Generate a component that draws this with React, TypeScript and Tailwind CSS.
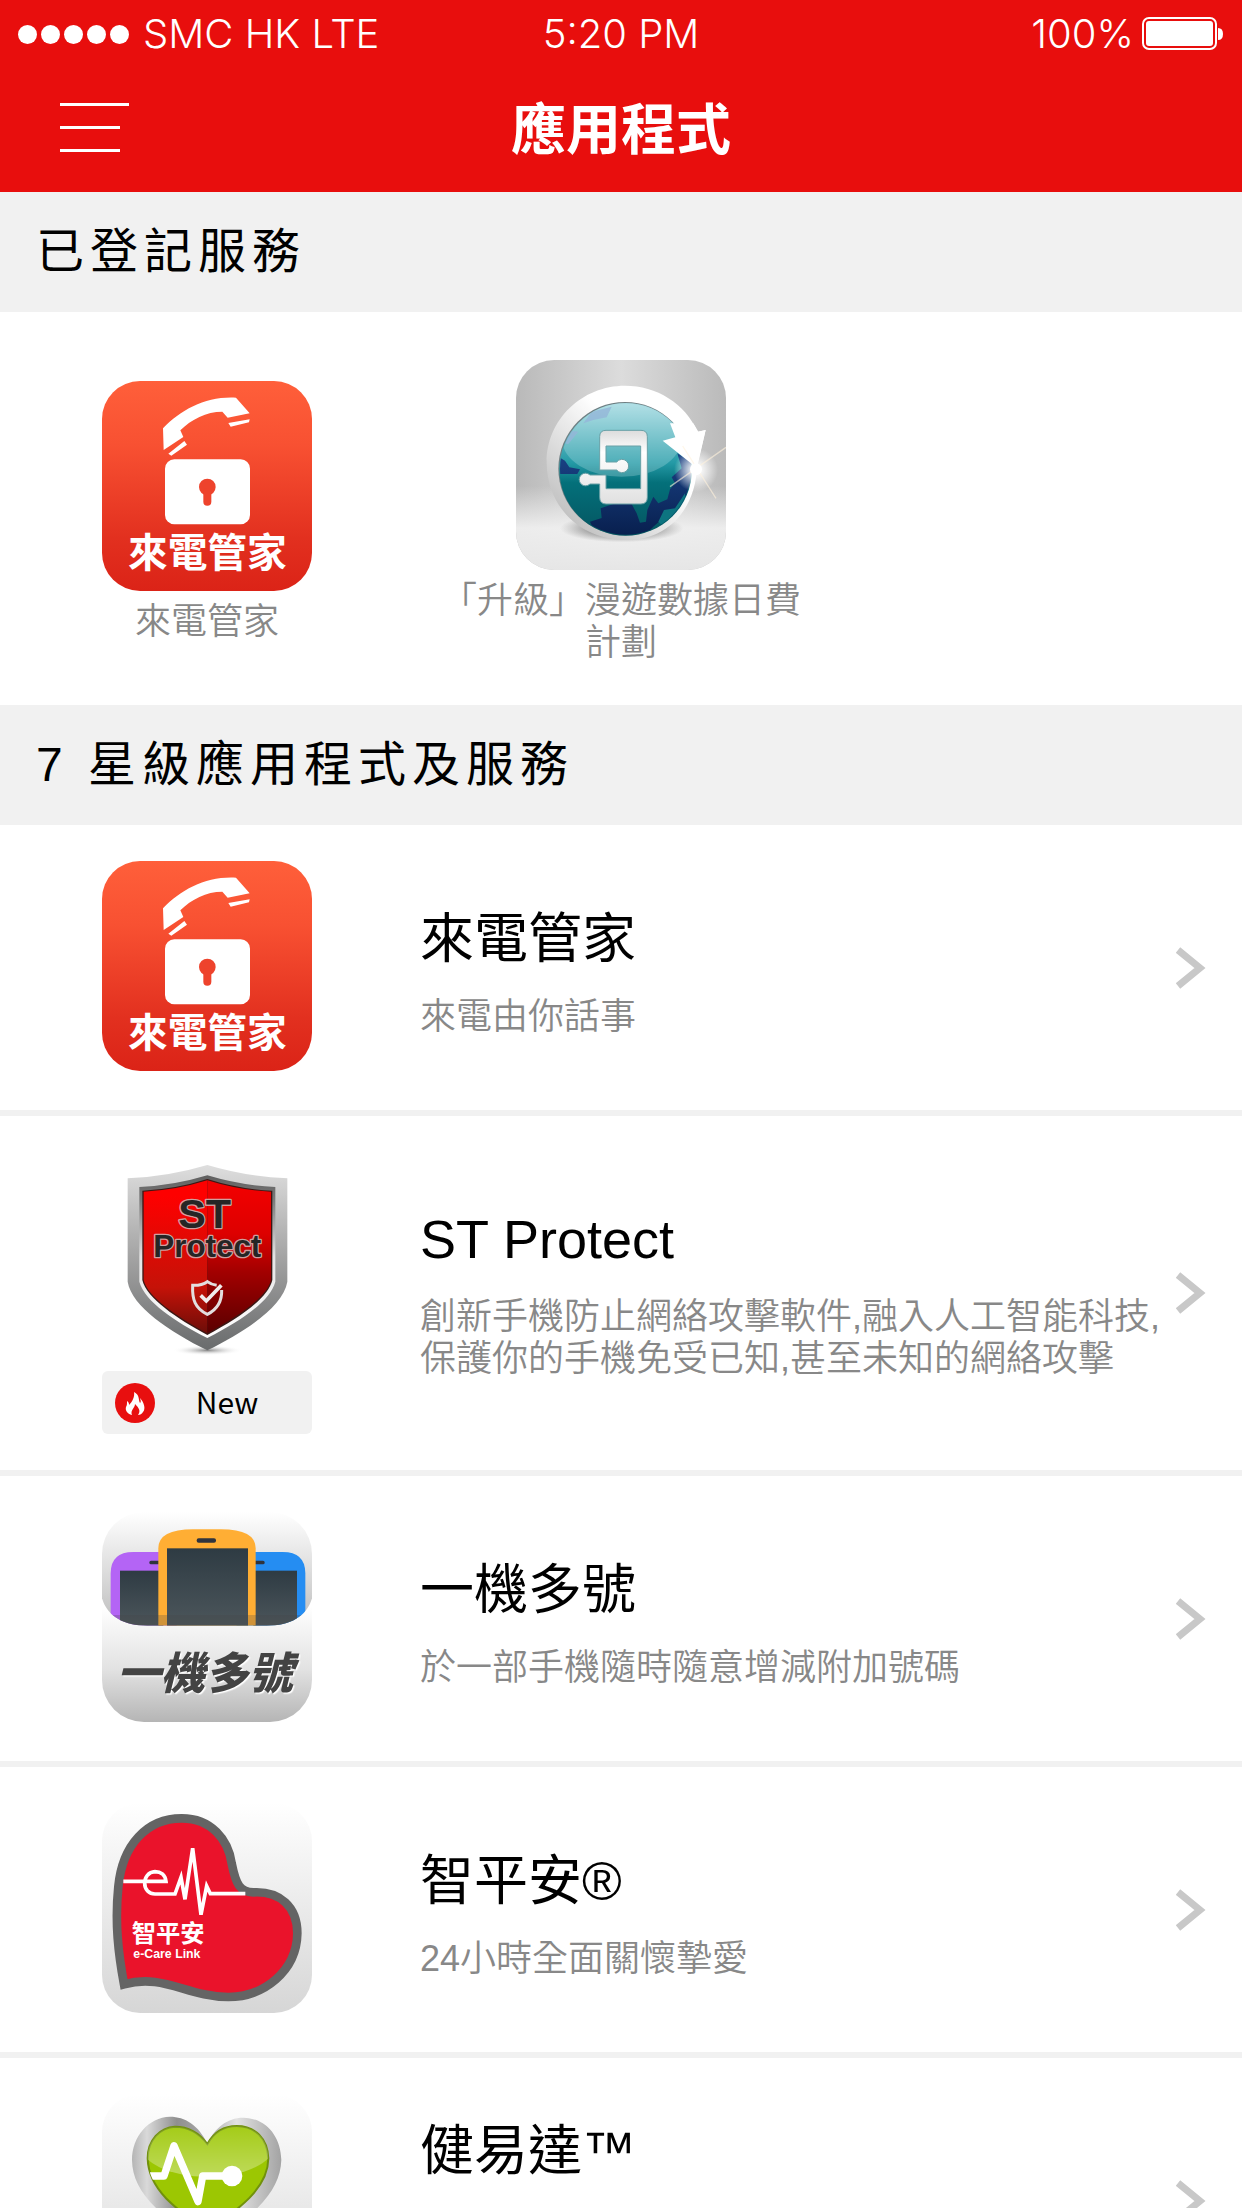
import React from "react";

const CallGuardIcon = () => (
  <svg viewBox="72 63 630 630" className="h-[210px] w-[210px] shrink-0" role="img" aria-label="來電管家">
    <defs>
      <linearGradient id="callBg" x1="0" y1="0" x2="0" y2="1">
        <stop offset="0" stopColor="#ff5f3a" />
        <stop offset="0.3" stopColor="#f85132" />
        <stop offset="0.75" stopColor="#e2301f" />
        <stop offset="1" stopColor="#db2317" />
      </linearGradient>
    </defs>
    <rect x="72" y="63" width="630" height="630" rx="114" fill="url(#callBg)" />
    {/* handset */}
    <path
      fill="#fff"
      d="M255 205C310 148 385 108 474 113L515 160L449 173L433 155C385 155 340 178 307 211L316 231L257 270Z"
    />
    <path fill="#fff" d="M451 189L515 178L513 187L458 200ZM271 281L319 243L327 254L280 287Z" />
    {/* lock */}
    <rect x="261" y="298" width="255" height="195" rx="28" fill="#fff" />
    <circle cx="388" cy="381" r="25" fill="#ee432c" />
    <rect x="376" y="385" width="24" height="52" rx="12" fill="#ee432c" />
    <text x="388" y="621" fontSize="119" textAnchor="middle" className="fill-white font-['Noto_Sans_CJK_TC',sans-serif] font-bold">
      來電管家
    </text>
  </svg>
);

const RoamingIcon = () => (
  <svg viewBox="228 60 630 630" className="h-[210px] w-[210px] shrink-0" role="img" aria-label="漫遊數據">
    <defs>
      <linearGradient id="roamWall" x1="0" y1="0" x2="1" y2="0">
        <stop offset="0" stopColor="#b9b9b9" />
        <stop offset="0.5" stopColor="#dcdcdc" />
        <stop offset="1" stopColor="#bababa" />
      </linearGradient>
      <linearGradient id="roamFloor" x1="0" y1="0" x2="0" y2="1">
        <stop offset="0.6" stopColor="#f4f4f4" stopOpacity="0" />
        <stop offset="0.8" stopColor="#f2f2f2" stopOpacity="0.9" />
        <stop offset="1" stopColor="#e6e6e6" />
      </linearGradient>
      <linearGradient id="roamSea" x1="0" y1="0" x2="0" y2="1">
        <stop offset="0" stopColor="#a8dbe2" />
        <stop offset="0.45" stopColor="#249aa6" />
        <stop offset="0.6" stopColor="#04707a" />
        <stop offset="1" stopColor="#045560" />
      </linearGradient>
      <linearGradient id="roamLand" x1="0" y1="0" x2="0" y2="1">
        <stop offset="0" stopColor="#1a4386" />
        <stop offset="1" stopColor="#071d4b" />
      </linearGradient>
      <linearGradient id="roamRing" x1="1" y1="0" x2="0" y2="1">
        <stop offset="0.4" stopColor="#fff" />
        <stop offset="0.85" stopColor="#c4c4c4" />
        <stop offset="1" stopColor="#aaa" />
      </linearGradient>
      <linearGradient id="roamPhone" x1="0" y1="0" x2="0" y2="1">
        <stop offset="0" stopColor="#dcdcdc" />
        <stop offset="0.3" stopColor="#fff" />
        <stop offset="1" stopColor="#e0e0e0" />
      </linearGradient>
      <radialGradient id="roamShadow">
        <stop offset="0.4" stopColor="#666" stopOpacity="0.8" />
        <stop offset="1" stopColor="#888" stopOpacity="0" />
      </radialGradient>
      <radialGradient id="roamGlow">
        <stop offset="0" stopColor="#fff" />
        <stop offset="0.3" stopColor="#fff" stopOpacity="0.8" />
        <stop offset="1" stopColor="#fff" stopOpacity="0" />
      </radialGradient>
      <clipPath id="roamBox">
        <rect x="228" y="60" width="630" height="630" rx="114" />
      </clipPath>
      <clipPath id="roamGlobe">
        <circle cx="557" cy="387" r="197" />
      </clipPath>
    </defs>
    <g clipPath="url(#roamBox)">
      <rect x="228" y="60" width="630" height="630" fill="url(#roamWall)" />
      <rect x="228" y="60" width="630" height="630" fill="url(#roamFloor)" />
      <ellipse cx="545" cy="565" rx="185" ry="42" fill="url(#roamShadow)" />
      {/* ring that ends in the arrow head */}
      <path
        fill="url(#roamRing)"
        d="M555 137C650 137 735 190 773 275L797 270L771 378C768 500 690 600 560 600C420 600 322 500 320 370C318 240 425 137 555 137Z"
      />
      <circle cx="555" cy="386" r="200" fill="#6f7f83" />
      <circle cx="557" cy="388" r="199" fill="url(#roamSea)" />
      <g clipPath="url(#roamGlobe)">
        <path
          fill="url(#roamLand)"
          d="M355 350L375 362L388 382L420 388L412 402L355 402ZM450 545L485 534L482 505L520 492L575 492L590 520L600 548L618 545L622 510L640 470L655 490L682 478L690 448L705 430L695 412L725 385L712 340L760 370L760 520L700 530L680 525L640 560L600 600L470 590Z"
        />
        <path fill="#0d7480" d="M655 545L672 510L705 505L735 460L735 500L705 540L670 560Z" />
        <path fill="#7fa3cf" opacity="0.8" d="M430 250L455 215L515 200L500 232L460 240ZM372 310L390 272L415 275L385 312Z" />
        <ellipse cx="545" cy="300" rx="178" ry="110" fill="#d5f1f4" opacity="0.25" />
      </g>
      <path fill="#fff" d="M668 302L706 292L690 250L760 250L775 275L797 270L771 384Z" />
      {/* phone with its two connectors */}
      <path
        fill="url(#roamPhone)"
        stroke="#68a0a6"
        strokeWidth="3"
        d="M498 271H603Q622 271 622 290V472Q622 492 603 492H498Q479 492 479 472V432H450A19 19 0 1 1 450 405H498V446H602V318H498V366H530A20 20 0 1 1 530 390H479V290Q479 271 498 271Z"
      />
      {/* sparkle */}
      <circle cx="768" cy="390" r="66" fill="url(#roamGlow)" />
      <path stroke="#fff1dc" strokeWidth="4" opacity="0.6" fill="none" d="M690 440L858 322M728 318L828 475" />
      <circle cx="768" cy="388" r="18" fill="#fff" />
    </g>
  </svg>
);

const ProtectIcon = () => (
  <svg viewBox="36 36 630 630" className="h-[210px] w-[210px] shrink-0" role="img" aria-label="ST Protect">
    <defs>
      <linearGradient id="shieldRim" x1="0" y1="0" x2="0" y2="1">
        <stop offset="0" stopColor="#dedede" />
        <stop offset="0.5" stopColor="#a3a3a3" />
        <stop offset="1" stopColor="#696b6c" />
      </linearGradient>
      <linearGradient id="shieldBevel" x1="0" y1="0" x2="0" y2="1">
        <stop offset="0" stopColor="#5f5f5f" />
        <stop offset="0.15" stopColor="#7a7a7a" />
        <stop offset="0.5" stopColor="#e4e4e4" />
        <stop offset="1" stopColor="#fff" />
      </linearGradient>
      <linearGradient id="shieldLeft" x1="0" y1="0" x2="0" y2="1">
        <stop offset="0.1" stopColor="#fe0000" />
        <stop offset="0.7" stopColor="#c51208" />
        <stop offset="1" stopColor="#6c0d08" />
      </linearGradient>
      <linearGradient id="shieldRight" x1="0" y1="0" x2="0" y2="1">
        <stop offset="0" stopColor="#f40000" />
        <stop offset="0.35" stopColor="#dd0000" />
        <stop offset="0.6" stopColor="#a20000" />
        <stop offset="1" stopColor="#5a0000" />
      </linearGradient>
      <radialGradient id="shieldShadow">
        <stop offset="0" stopColor="#888" />
        <stop offset="1" stopColor="#fff" stopOpacity="0" />
      </radialGradient>
    </defs>
    <ellipse cx="352" cy="631" rx="105" ry="15" fill="url(#shieldShadow)" />
    <path fill="url(#shieldRim)" d="M352 75Q470 110 592 115V425C580 500 465 575 352 631C240 575 125 500 113 425V115Q235 110 352 75Z" />
    <path fill="url(#shieldBevel)" d="M352 106Q455 137 556 141V425C540 485 450 545 352 594C255 545 165 485 148 425V141Q250 137 352 106Z" />
    <path fill="#3c1714" d="M352 117Q450 148 547 152V420C535 475 445 535 352 585C260 535 170 475 157 420V152Q255 148 352 117Z" />
    <path fill="url(#shieldLeft)" d="M352 121V580C262 530 173 472 161 420V155Q256 151 352 121Z" />
    <path fill="url(#shieldRight)" d="M352 121V580C442 530 531 472 543 420V155Q448 151 352 121Z" />
    <text
      className="font-['Liberation_Sans',sans-serif] font-bold"
      fill="#252525"
      stroke="#cf9f9f"
      strokeWidth="8"
      strokeLinejoin="round"
      paintOrder="stroke"
      textAnchor="middle"
    >
      <tspan x="344" y="264" fontSize="124">ST</tspan>
      <tspan x="352" y="350" fontSize="94">Protect</tspan>
    </text>
    <path
      fill="none"
      stroke="#e3dede"
      strokeWidth="9"
      d="M380 436Q362 433 352 425Q335 437 308 436C306 478 315 505 352 523C388 505 396 478 395 450"
    />
    <path fill="none" stroke="#f1eded" strokeWidth="11" d="M332 466L349 483L394 436" />
  </svg>
);

const PhonesIcon = () => (
  <svg viewBox="36 36 630 630" className="h-[210px] w-[210px] shrink-0" role="img" aria-label="一機多號">
    <defs>
      <linearGradient id="phonesTop" x1="0" y1="0" x2="0" y2="1">
        <stop offset="0" stopColor="#fff" />
        <stop offset="1" stopColor="#bdbdbd" />
      </linearGradient>
      <linearGradient id="phonesBottom" x1="0" y1="0" x2="0" y2="1">
        <stop offset="0.45" stopColor="#fff" />
        <stop offset="0.75" stopColor="#e2e2e2" />
        <stop offset="1" stopColor="#b5b5b5" />
      </linearGradient>
      <linearGradient id="phonesScreen" x1="0" y1="0" x2="0" y2="1">
        <stop offset="0" stopColor="#2e3b43" />
        <stop offset="1" stopColor="#4d575c" />
      </linearGradient>
      <clipPath id="phonesBox">
        <rect x="36" y="36" width="630" height="630" rx="126" />
      </clipPath>
      <clipPath id="phonesTray">
        <path d="M36 36H666V295C650 350 600 377 530 377H172C102 377 52 350 36 295Z" />
      </clipPath>
    </defs>
    <g clipPath="url(#phonesBox)">
      <rect x="36" y="36" width="630" height="630" fill="url(#phonesBottom)" />
      <g clipPath="url(#phonesTray)">
        <rect x="36" y="36" width="630" height="341" fill="url(#phonesTop)" />
        <path fill="#b464f5" d="M62 377V220Q62 156 130 156H260V377Z" />
        <path fill="#258df2" d="M646 377V220Q646 156 578 156H440V377Z" />
        <rect x="178" y="182" width="50" height="11" rx="5" fill="#30343d" />
        <rect x="478" y="182" width="46" height="11" rx="5" fill="#30343d" />
        <rect x="90" y="212" width="130" height="170" fill="url(#phonesScreen)" />
        <rect x="490" y="212" width="131" height="170" fill="url(#phonesScreen)" />
        <path fill="#ffae34" d="M205 377V145Q205 88 310 88H392Q497 88 497 145V377Z" />
        <rect x="320" y="115" width="58" height="13" rx="6" fill="#30343d" />
        <rect x="231" y="145" width="243" height="240" fill="url(#phonesScreen)" />
        <rect x="36" y="345" width="630" height="32" fill="#444" opacity="0.25" />
      </g>
      <text
        x="80"
        y="566"
        fontSize="132"
        fill="#434343"
        className="font-['Noto_Sans_CJK_TC',sans-serif] font-black italic drop-shadow-[4px_4px_1px_#fff]"
      >
        一機多號
      </text>
    </g>
  </svg>
);

const CareLinkIcon = () => (
  <svg viewBox="36 39 630 630" className="h-[210px] w-[210px] shrink-0" role="img" aria-label="智平安">
    <defs>
      <linearGradient id="careBg" x1="0" y1="0" x2="0" y2="1">
        <stop offset="0" stopColor="#fff" />
        <stop offset="1" stopColor="#d6d6d6" />
      </linearGradient>
    </defs>
    <rect x="36" y="39" width="630" height="630" rx="114" fill="url(#careBg)" />
    <path
      fill="#ea132b"
      stroke="#646464"
      strokeWidth="26"
      d="M102 583C85 490 74 400 85 290C97 165 170 85 275 85C365 85 415 150 425 220C438 285 450 305 490 307C570 303 622 350 622 430C620 545 520 621 415 621C290 620 220 550 102 583Z"
    />
    {/* e and pulse line */}
    <path
      fill="none"
      stroke="#fff"
      strokeWidth="11"
      d="M100 274H228C226 254 212 245 195 245C175 246 164 262 164 279C164 299 177 312 195 312H255L273 262L285 328L308 175L333 374L350 288L361 311H466"
    />
    <g fill="#fff" className="font-bold">
      <text x="125" y="455" fontSize="73" className="font-['Noto_Sans_CJK_TC',sans-serif]">智平安</text>
      <text x="130" y="504" fontSize="37" className="font-['Liberation_Sans',sans-serif]">e-Care Link</text>
    </g>
  </svg>
);

const HealthIcon = () => (
  <svg viewBox="36 42 630 630" className="h-[210px] w-[210px] shrink-0" role="img" aria-label="健易達">
    <defs>
      <linearGradient id="healthBg" x1="0" y1="0" x2="0" y2="1">
        <stop offset="0" stopColor="#fff" />
        <stop offset="1" stopColor="#d6d6d6" />
      </linearGradient>
      <linearGradient id="healthRim" x1="0" y1="0" x2="1" y2="0">
        <stop offset="0" stopColor="#b5b5b5" />
        <stop offset="0.1" stopColor="#d9d9d9" />
        <stop offset="0.3" stopColor="#8f8f8f" />
        <stop offset="0.5" stopColor="#a9a9a9" />
        <stop offset="0.7" stopColor="#e2e2e2" />
        <stop offset="1" stopColor="#a3a3a3" />
      </linearGradient>
      <linearGradient id="healthShine" x1="0" y1="0" x2="0" y2="1">
        <stop offset="0" stopColor="#fff" stopOpacity="0" />
        <stop offset="1" stopColor="#fff" stopOpacity="0.35" />
      </linearGradient>
      <clipPath id="healthHeart">
        <path d="M352 192C325 155 290 140 255 140C210 142 173 180 173 235C175 330 260 390 352 450C445 390 535 325 535 235C533 175 495 138 440 138C400 138 370 160 352 192Z" />
      </clipPath>
    </defs>
    <rect x="36" y="42" width="630" height="630" rx="114" fill="url(#healthBg)" />
    <path fill="url(#healthRim)" d="M352 190C325 135 285 110 240 110C175 112 126 170 126 240C128 330 190 390 352 510C510 390 570 330 574 240C572 170 530 115 460 113C410 113 375 145 352 190Z" />
    <path
      fill="#9cc702"
      stroke="#71910c"
      strokeWidth="6"
      d="M352 192C325 155 290 140 255 140C210 142 173 180 173 235C175 330 260 390 352 450C445 390 535 325 535 235C533 175 495 138 440 138C400 138 370 160 352 192Z"
    />
    <ellipse cx="352" cy="190" rx="205" ry="100" fill="url(#healthShine)" clipPath="url(#healthHeart)" />
    <path
      fill="none"
      stroke="#fff"
      strokeWidth="22"
      strokeLinejoin="round"
      d="M180 288H222L252 197L324 365L338 288H420"
      clipPath="url(#healthHeart)"
    />
    <circle cx="426" cy="288" r="31" fill="#fff" />
  </svg>
);

const FlameIcon = () => (
  <svg viewBox="0 0 40 40" className="h-10 w-10 shrink-0" aria-hidden="true">
    <circle cx="20" cy="20" r="20" fill="#e80f0f" />
    <path
      fill="#fff"
      d="M19 9C25 12 23 16 25 20C26 19 26 18 25 15C29 19 31 26 28 29C27 31 25 32 23 32C26 28 24 25 20 21C20 25 15 27 17 32C12 31 10 27 11 24C12 22 12 21 12 18C14 19 14 21 14 22C17 19 20 14 19 9Z"
    />
  </svg>
);

const Chevron = () => (
  <svg viewBox="0 0 30 42" className="h-[42px] w-[30px] shrink-0" aria-hidden="true">
    <path d="M2 3L24 21L2 39" fill="none" stroke="#c8c8c8" strokeWidth="7" />
  </svg>
);

const SectionTitle = ({ children }: { children: React.ReactNode }) => (
  <h2 className="flex h-[120px] items-center bg-[#f1f1f1] px-9 text-5xl tracking-[6px] text-black">{children}</h2>
);

const services = [
  { name: "來電管家", Icon: CallGuardIcon },
  { name: "「升級」漫遊數據日費計劃", Icon: RoamingIcon },
];

const apps = [
  { title: "來電管家", desc: "來電由你話事", Icon: CallGuardIcon, isNew: false },
  {
    title: "ST Protect",
    desc: "創新手機防止網絡攻擊軟件,融入人工智能科技,保護你的手機免受已知,甚至未知的網絡攻擊",
    Icon: ProtectIcon,
    isNew: true,
  },
  { title: "一機多號", desc: "於一部手機隨時隨意增減附加號碼", Icon: PhonesIcon, isNew: false },
  { title: "智平安®", desc: "24小時全面關懷摯愛", Icon: CareLinkIcon, isNew: false },
  { title: "健易達™", desc: "", Icon: HealthIcon, isNew: false },
];

const App = () => {
  return (
    <div className="h-screen overflow-hidden bg-white font-['Liberation_Sans','Noto_Sans_CJK_TC',sans-serif]">
      {/* Header */}
      <header className="bg-[#e80e0d] text-white">
        <div className="grid h-[68px] grid-cols-3 items-center px-[18px] font-['Inter',sans-serif] text-[40px] font-[350]">
          <div className="flex items-center gap-[14px] whitespace-nowrap">
            <div className="flex gap-[4px]">
              {[0, 1, 2, 3, 4].map((dot) => (
                <span key={dot} className="h-[19px] w-[19px] rounded-full bg-white" />
              ))}
            </div>
            <span>SMC HK LTE</span>
          </div>
          <div className="text-center">5:20 PM</div>
          <div className="flex items-center justify-end gap-2">
            <span>100%</span>
            <svg viewBox="0 0 82 34" className="h-[34px] w-[82px]" aria-hidden="true">
              <rect x="1" y="1" width="73" height="31" rx="6" fill="none" stroke="#fff" strokeWidth="2" />
              <rect x="4" y="4" width="67" height="25" rx="3" fill="#fff" />
              <path d="M76 11Q81 11 81 17Q81 23 76 23Z" fill="#fff" />
            </svg>
          </div>
        </div>
        <div className="grid h-[124px] grid-cols-3 items-center px-[60px]">
          <button type="button" aria-label="Menu" className="flex w-[69px] flex-col gap-5 pb-1.5">
            <span className="h-[3px] w-[69px] bg-white" />
            <span className="h-[3px] w-[60px] bg-white" />
            <span className="h-[3px] w-[60px] bg-white" />
          </button>
          <h1 className="text-center text-[55px] leading-[66px] font-bold">應用程式</h1>
        </div>
      </header>

      {/* Registered services */}
      <SectionTitle>已登記服務</SectionTitle>
      <div className="grid grid-cols-3 items-center pt-12 pb-[41px]">
        {services.map(({ name, Icon }) => (
          <a key={name} href="#" className="flex flex-col items-center gap-[10px]">
            <Icon />
            <span className="w-[378px] text-center text-4xl leading-[42px] font-[350] text-[#888]">{name}</span>
          </a>
        ))}
      </div>

      {/* App list */}
      <SectionTitle>7 星級應用程式及服務</SectionTitle>
      <ul>
        {apps.map(({ title, desc, Icon, isNew }) => (
          <li key={title} className="border-b-6 border-[#f1f1f1]">
            <a href="#" className="flex min-h-[285px] items-center py-9 pr-9 pl-[102px]">
              <div className="flex flex-col gap-[9px] self-start">
                <Icon />
                {isNew && (
                  <div className="flex h-[63px] items-center rounded-md bg-[#f1f1f1] px-[13px]">
                    <FlameIcon />
                    <span className="flex-1 pb-1 text-center font-['Noto_Sans_CJK_TC',sans-serif] text-3xl text-black">New</span>
                  </div>
                )}
              </div>
              <div className={isNew ? "ml-[108px] flex-1" : "ml-[108px] flex-1 pt-2"}>
                <h3 className="text-[54px] leading-[66px] text-black">{title}</h3>
                <p className="mt-6 text-4xl leading-[42px] font-[350] text-[#888] empty:h-[84px]">{desc}</p>
              </div>
              <Chevron />
            </a>
          </li>
        ))}
      </ul>
    </div>
  );
};

export default App;
